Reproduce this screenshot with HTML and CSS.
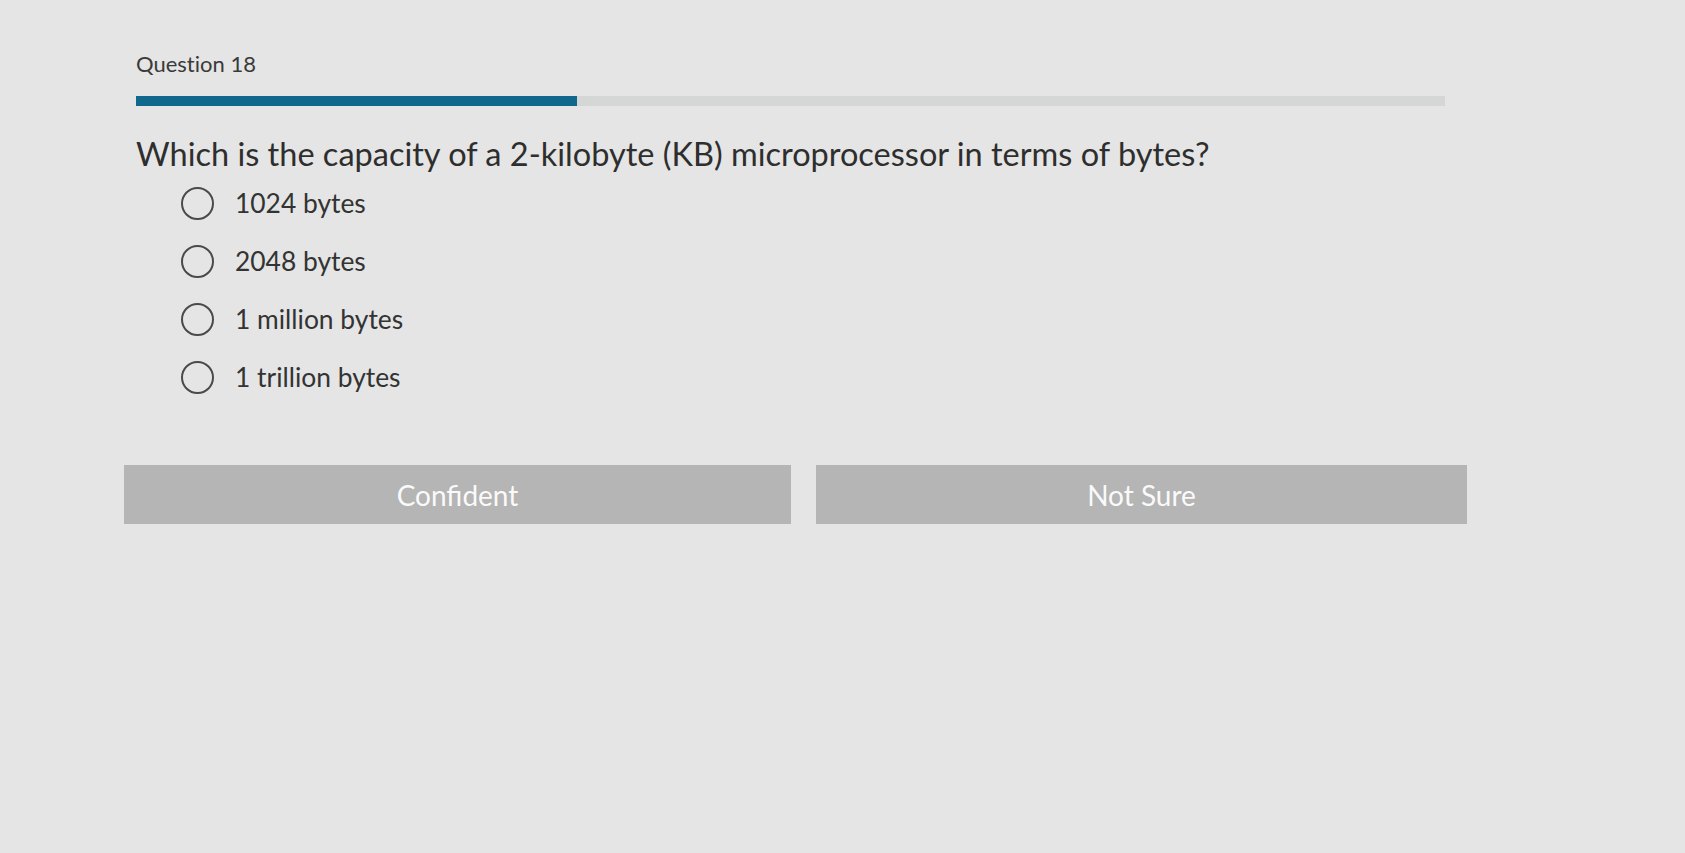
FILE: index.html
```html
<!DOCTYPE html>
<html>
<head>
<meta charset="utf-8">
<link rel="stylesheet" href="styles.css">
</head>
<body>
<main class="page">
  <div class="label">Question 18</div>
  <div class="progress"><div class="progress-fill"></div></div>
  <h1 class="question">Which is the capacity of a 2-kilobyte (KB) microprocessor in terms of bytes?</h1>
  <ul class="options">
    <li class="option"><span class="radio"></span><span class="opt-text">1024 bytes</span></li>
    <li class="option"><span class="radio"></span><span class="opt-text">2048 bytes</span></li>
    <li class="option"><span class="radio"></span><span class="opt-text">1 million bytes</span></li>
    <li class="option"><span class="radio"></span><span class="opt-text">1 trillion bytes</span></li>
  </ul>
  <div class="buttons">
    <button class="btn">Confident</button>
    <button class="btn">Not Sure</button>
  </div>
</main>
</body>
</html>
```
FILE: styles.css
```css
html, body {
  margin: 0;
  height: 100%;
}
body {
  background: #e4e5e4;
  font-family: Lato, "Open Sans", sans-serif;
  font-variant-ligatures: none;
  color: #333;
}
.page {
  padding: 52px 0 0 136px;
  width: 1331px;
}
.label {
  font-size: 22px;
  line-height: 24px;
  color: #3a3a3a;
}
.progress {
  margin-top: 20px;
  width: 1309px;
  height: 10px;
  background: #d5d6d6;
}
.progress-fill {
  width: 441px;
  height: 100%;
  background: #10698d;
}
.question {
  margin: 29px 0 0 0;
  font-weight: 400;
  font-size: 32.5px;
  line-height: 38px;
  color: #2e2e2e;
}
.options {
  list-style: none;
  margin: 1px 0 0 0;
  padding: 0 0 0 45px;
}
.option {
  display: flex;
  align-items: center;
  height: 58px;
}
.radio {
  width: 29px;
  height: 29px;
  border: 2.5px solid #4a4a4a;
  border-radius: 50%;
  flex: none;
}
.opt-text {
  margin-left: 21px;
  font-size: 26.4px;
  color: #333;
}
.buttons {
  display: flex;
  gap: 25px;
  margin: 59px 0 0 -12px;
}
.btn {
  border: 0;
  background: #b4b5b4;
  color: #fafafa;
  font-family: Lato, "Open Sans", sans-serif;
  font-size: 28px;
  height: 59px;
  width: 667px;
  padding: 0;
}
.btn + .btn {
  width: 651px;
}
```
